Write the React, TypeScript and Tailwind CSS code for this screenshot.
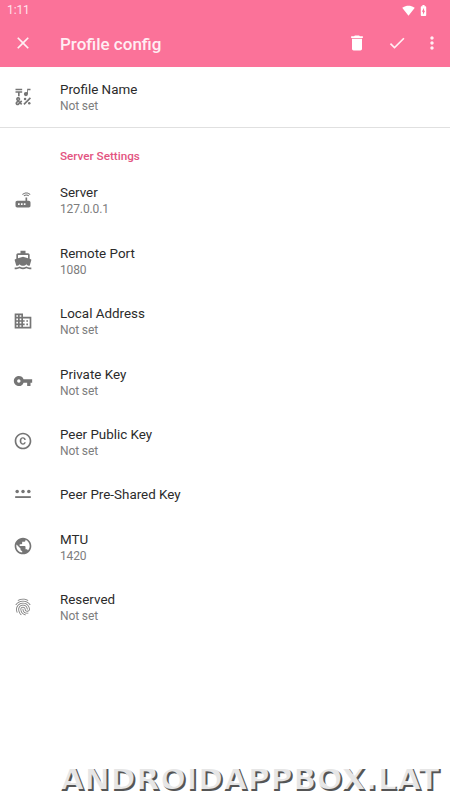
import type { ComponentType } from "react";
import {
  MdBatteryChargingFull,
  MdCheck,
  MdClose,
  MdCopyright,
  MdDelete,
  MdDirectionsBoat,
  MdDomain,
  MdEmojiSymbols,
  MdFingerprint,
  MdMoreVert,
  MdPublic,
  MdRouter,
  MdSignalWifi4Bar,
  MdVpnKey,
} from "react-icons/md";

interface IconProps {
  className?: string;
}

function PasswordDots({ className }: IconProps) {
  return (
    <svg viewBox="0 0 24 24" fill="currentColor" className={className}>
      <circle cx="5" cy="9" r="2.1" />
      <circle cx="12" cy="9" r="2.1" />
      <circle cx="19" cy="9" r="2.1" />
      <rect x="2.6" y="14.6" width="18.8" height="2.2" />
    </svg>
  );
}

interface PreferenceProps {
  icon: ComponentType<IconProps>;
  title: string;
  summary?: string;
}

function Preference({ icon: Icon, title, summary }: PreferenceProps) {
  return (
    <div className={`flex items-center pl-[13.4px] ${summary ? "h-[60.4px]" : "h-[44.6px]"}`}>
      <Icon className="mr-[26.6px] mb-[1.4px] size-5 shrink-0 text-[#757575]" />
      <div className={`flex flex-col ${summary ? "pt-[1.6px]" : ""}`}>
        <span className="text-[13.4px] leading-[17px] text-[#2b2b2b]">{title}</span>
        {summary && (
          <span className="text-[12px] leading-[17px] tracking-[-0.12px] text-[#7d7d7d]">{summary}</span>
        )}
      </div>
    </div>
  );
}

export default function App() {
  return (
    <div className="flex h-[800px] w-[450px] flex-col overflow-hidden bg-white font-[Roboto,sans-serif]">
      <header className="h-[67px] shrink-0 bg-[#fb7299] text-white">
        <div className="flex h-5 items-center pl-[7px] pr-[20px]">
          <span className="text-[12px] leading-5 tracking-[-0.1px] text-[#ffe3eb]">1:11</span>
          <MdSignalWifi4Bar className="ml-auto size-[13px]" />
          <MdBatteryChargingFull className="ml-[2px] size-[13px]" />
        </div>
        <div className="flex h-[47px] items-center pl-[13.3px] pr-[8px]">
          <MdClose className="mb-px size-5 text-[#fff0f4]" />
          <h1 className="ml-[26.7px] mt-px text-[17px] font-medium leading-5 text-[#ffeef3]">Profile config</h1>
          <MdDelete className="mb-px ml-auto size-5" />
          <MdCheck className="mb-px ml-5 size-5 text-[#fff0f4]" />
          <MdMoreVert className="mb-px ml-[15px] size-5 text-[#fff0f4]" />
        </div>
      </header>
      <section className="border-b border-[#e0e0e0]">
        <Preference icon={MdEmojiSymbols} title="Profile Name" summary="Not set" />
      </section>
      <section className="flex flex-col">
        <h2 className="flex h-[42px] items-end pb-[6.6px] pl-[60px] text-[11.7px] font-medium leading-4 text-[#e35481]">
          Server Settings
        </h2>
        <Preference icon={MdRouter} title="Server" summary="127.0.0.1" />
        <Preference icon={MdDirectionsBoat} title="Remote Port" summary="1080" />
        <Preference icon={MdDomain} title="Local Address" summary="Not set" />
        <Preference icon={MdVpnKey} title="Private Key" summary="Not set" />
        <Preference icon={MdCopyright} title="Peer Public Key" summary="Not set" />
        <Preference icon={PasswordDots} title="Peer Pre-Shared Key" />
        <Preference icon={MdPublic} title="MTU" summary="1420" />
        <Preference icon={MdFingerprint} title="Reserved" summary="Not set" />
      </section>
      <footer className="mt-auto flex justify-end pb-[5px] pr-[11px]">
        <span className="whitespace-nowrap font-['DejaVu_Sans',sans-serif] text-[31px] font-bold leading-[34px] text-white/85 [text-shadow:2px_2px_0_#555]">
          ANDROIDAPPBOX.LAT
        </span>
      </footer>
    </div>
  );
}
